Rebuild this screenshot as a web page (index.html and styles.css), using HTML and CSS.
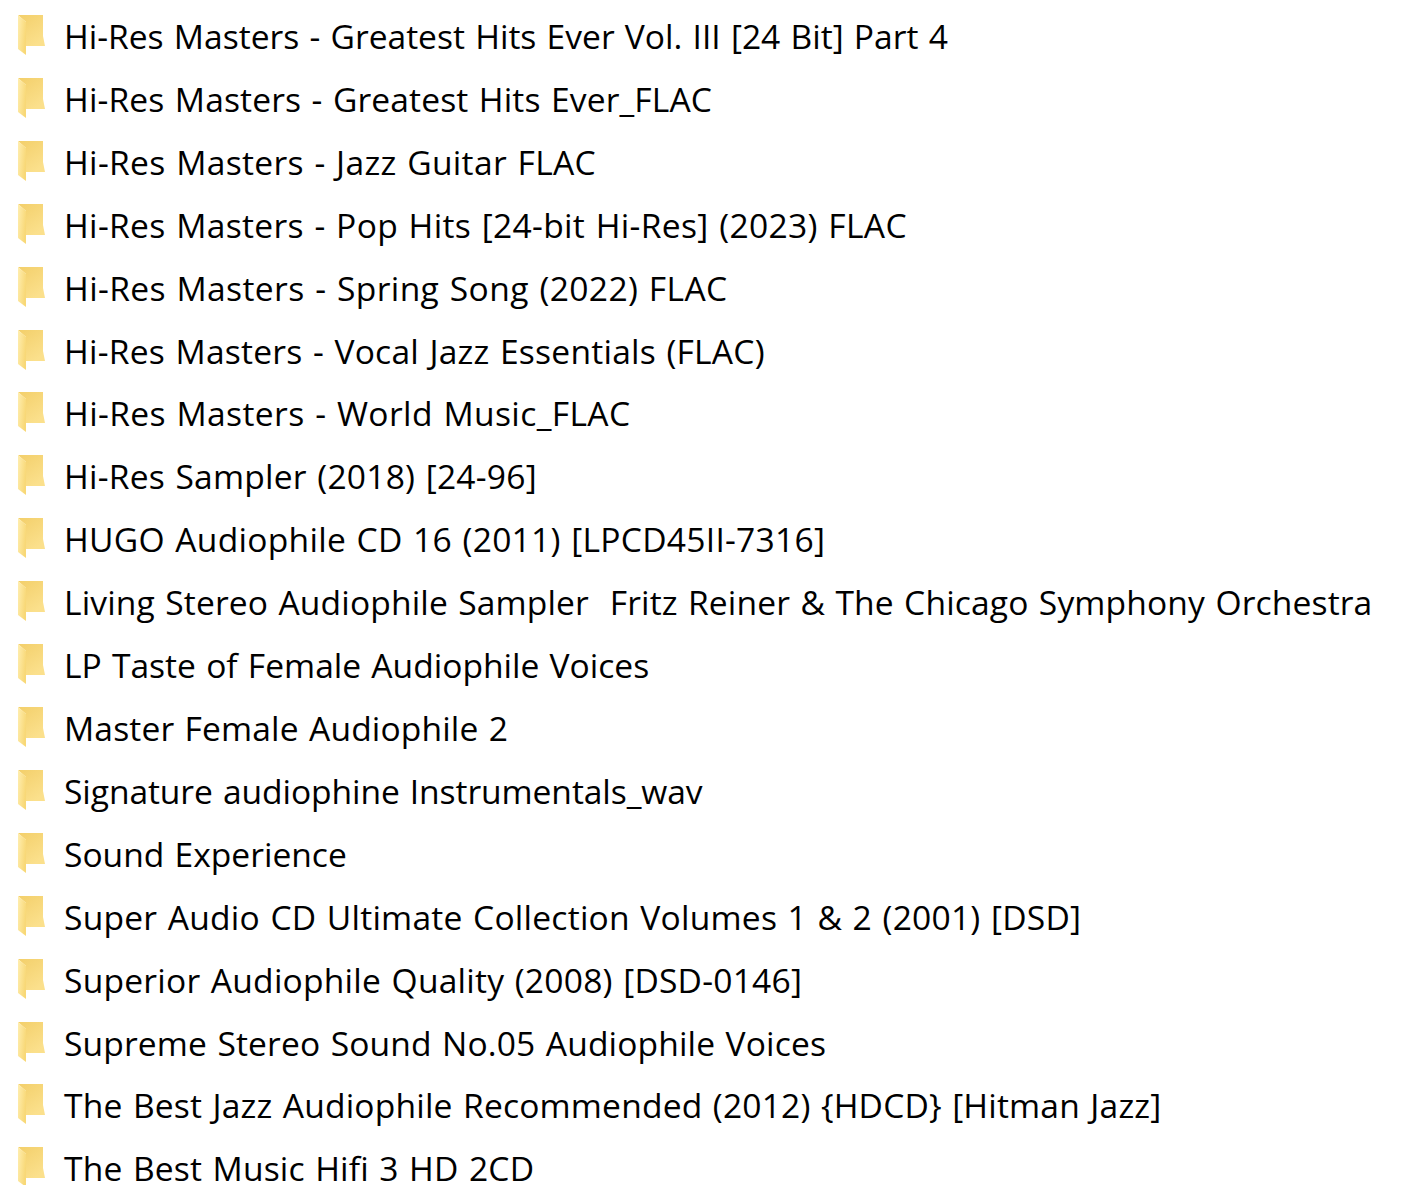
FILE: index.html
```html
<!DOCTYPE html>
<html lang="en">
<head>
<meta charset="utf-8">
<title>Folder list</title>
<link rel="stylesheet" href="styles.css">
</head>
<body>
<svg class="defs" width="0" height="0" aria-hidden="true">
  <defs>
    <linearGradient id="back" x1="0" y1="0" x2="0.6" y2="1">
      <stop offset="0" stop-color="#f3cf6a"/>
      <stop offset="1" stop-color="#fbe08c"/>
    </linearGradient>
    <linearGradient id="front" x1="0" y1="0" x2="1" y2="0.4">
      <stop offset="0" stop-color="#ffeeb0"/>
      <stop offset="1" stop-color="#f8d877"/>
    </linearGradient>
    <symbol id="folder" viewBox="0 0 29 40">
      <path d="M1 0H26V21L28 31H9V7Z" fill="url(#back)"/>
      <path d="M1 0L9 7V40L1 34Z" fill="url(#front)"/>
    </symbol>
  </defs>
</svg>
<ul class="list">
  <li class="row"><svg class="icon"><use href="#folder"/></svg><span class="name">Hi-Res Masters - Greatest Hits Ever Vol. III [24 Bit] Part 4</span></li>
  <li class="row"><svg class="icon"><use href="#folder"/></svg><span class="name track-14">Hi-Res Masters - Greatest Hits Ever_FLAC</span></li>
  <li class="row"><svg class="icon"><use href="#folder"/></svg><span class="name track-33">Hi-Res Masters - Jazz Guitar FLAC</span></li>
  <li class="row"><svg class="icon"><use href="#folder"/></svg><span class="name track-33">Hi-Res Masters - Pop Hits [24-bit Hi-Res] (2023) FLAC</span></li>
  <li class="row"><svg class="icon"><use href="#folder"/></svg><span class="name track-38">Hi-Res Masters - Spring Song (2022) FLAC</span></li>
  <li class="row"><svg class="icon"><use href="#folder"/></svg><span class="name track-23">Hi-Res Masters - Vocal Jazz Essentials (FLAC)</span></li>
  <li class="row"><svg class="icon"><use href="#folder"/></svg><span class="name track-38">Hi-Res Masters - World Music_FLAC</span></li>
  <li class="row"><svg class="icon"><use href="#folder"/></svg><span class="name track-23">Hi-Res Sampler (2018) [24-96]</span></li>
  <li class="row"><svg class="icon"><use href="#folder"/></svg><span class="name track-27">HUGO Audiophile CD 16 (2011) [LPCD45II-7316]</span></li>
  <li class="row"><svg class="icon"><use href="#folder"/></svg><span class="name track-14">Living Stereo Audiophile Sampler&nbsp; Fritz Reiner &amp; The Chicago Symphony Orchestra</span></li>
  <li class="row"><svg class="icon"><use href="#folder"/></svg><span class="name">LP Taste of Female Audiophile Voices</span></li>
  <li class="row"><svg class="icon"><use href="#folder"/></svg><span class="name track-14">Master Female Audiophile 2</span></li>
  <li class="row"><svg class="icon"><use href="#folder"/></svg><span class="name track-neg">Signature audiophine Instrumentals_wav</span></li>
  <li class="row"><svg class="icon"><use href="#folder"/></svg><span class="name">Sound Experience</span></li>
  <li class="row"><svg class="icon"><use href="#folder"/></svg><span class="name track-23">Super Audio CD Ultimate Collection Volumes 1 &amp; 2 (2001) [DSD]</span></li>
  <li class="row"><svg class="icon"><use href="#folder"/></svg><span class="name track-23">Superior Audiophile Quality (2008) [DSD-0146]</span></li>
  <li class="row"><svg class="icon"><use href="#folder"/></svg><span class="name track-14">Supreme Stereo Sound No.05 Audiophile Voices</span></li>
  <li class="row"><svg class="icon"><use href="#folder"/></svg><span class="name track-18">The Best Jazz Audiophile Recommended (2012) {HDCD} [Hitman Jazz]</span></li>
  <li class="row"><svg class="icon"><use href="#folder"/></svg><span class="name track-18">The Best Music Hifi 3 HD 2CD</span></li>
</ul>
</body>
</html>
```

FILE: styles.css
```css
html, body {
  margin: 0;
  padding: 0;
  background: #ffffff;
  height: 1185px;
  overflow: hidden;
}
.defs {
  display: block;
  height: 0;
}
.list {
  list-style: none;
  margin: 0;
  padding: 4.6px 0 0 17px;
  display: flex;
  flex-direction: column;
}
.row {
  display: flex;
  align-items: center;
  height: 62.92px;
  gap: 18px;
  flex: none;
}
.icon {
  width: 29px;
  height: 40px;
  margin-bottom: 2px;
  flex: none;
}
.name {
  font-family: "Open Sans", "Noto Sans", sans-serif;
  font-size: 33.6px;
  word-spacing: 1.5px;
  color: #000000;
  white-space: pre;
}
.track-neg { letter-spacing: -0.08px; }
.track-14 { letter-spacing: 0.14px; }
.track-18 { letter-spacing: 0.18px; }
.track-23 { letter-spacing: 0.23px; }
.track-27 { letter-spacing: 0.27px; }
.track-33 { letter-spacing: 0.33px; }
.track-38 { letter-spacing: 0.38px; }
```
